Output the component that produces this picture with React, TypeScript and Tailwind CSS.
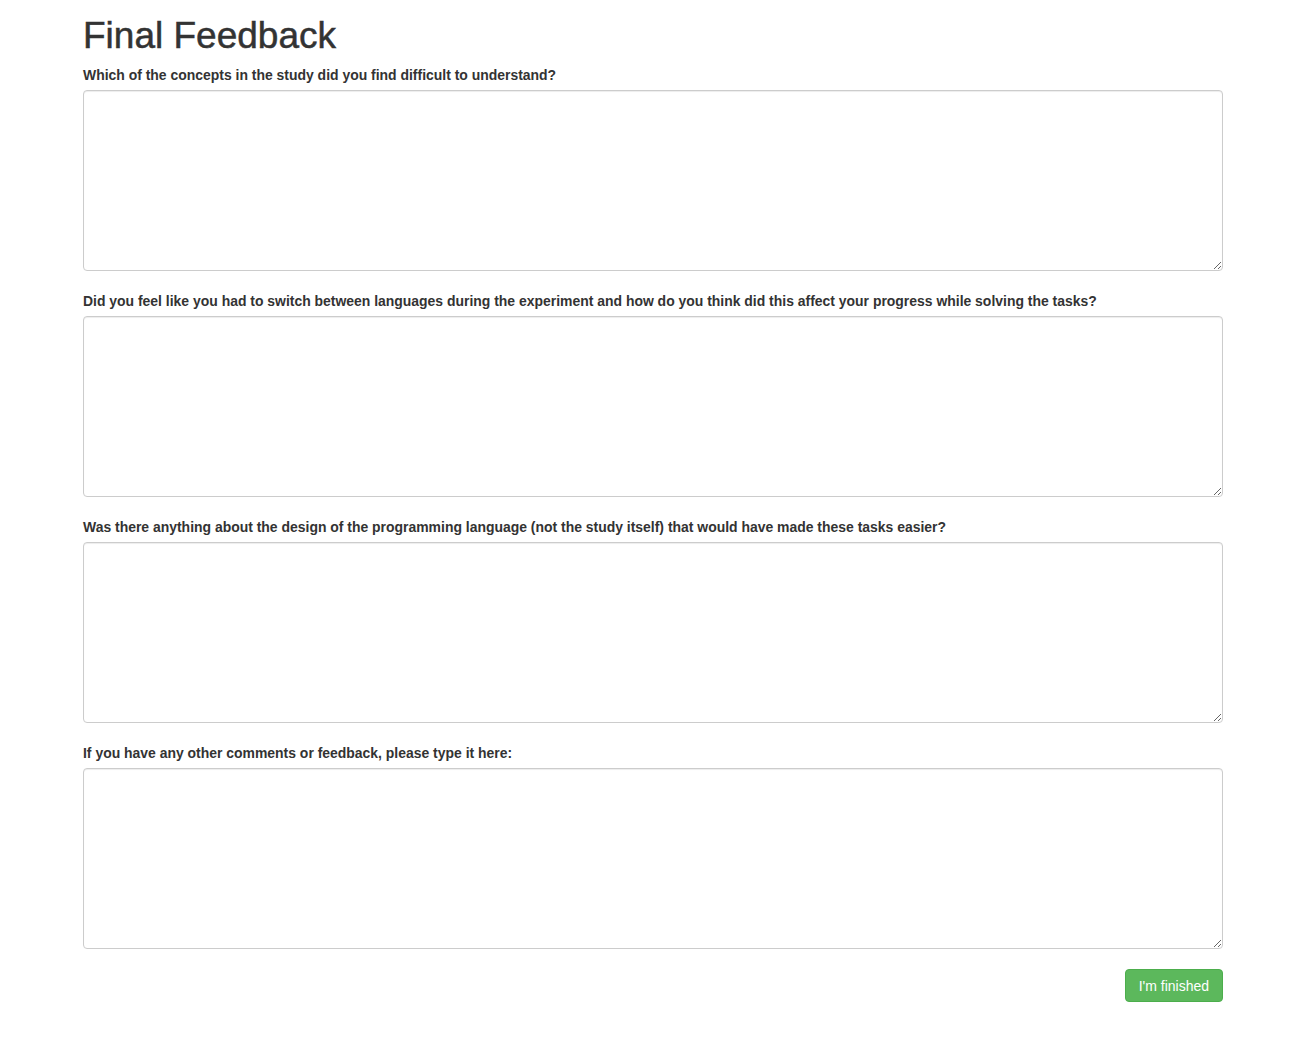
const questions = [
  "Which of the concepts in the study did you find difficult to understand?",
  "Did you feel like you had to switch between languages during the experiment and how do you think did this affect your progress while solving the tasks?",
  "Was there anything about the design of the programming language (not the study itself) that would have made these tasks easier?",
  "If you have any other comments or feedback, please type it here:",
];

export default function App() {
  return (
    <div className="min-h-screen bg-white text-[#333] font-['Liberation_Sans',Arial,sans-serif]">
      <div className="ml-[83px] w-[1140px]">
        <h1 className="mt-[16px] mb-[12px] text-[37px] leading-[40px] font-medium [-webkit-text-stroke:0.5px_#333]">
          Final Feedback
        </h1>
        <form onSubmit={(e) => e.preventDefault()}>
          {questions.map((q, i) => (
            <div key={i} className={i === questions.length - 1 ? "mb-[20px]" : "mb-[23px]"}>
              <label className="block mb-[7px] text-[13.95px] leading-[15px] font-bold">{q}</label>
              <textarea className="block w-full h-[181px] rounded-[4px] border border-[#ccc] px-3 py-1.5 text-sm shadow-[inset_0_1px_1px_rgba(0,0,0,0.075)] outline-none focus:border-[#66afe9]" />
            </div>
          ))}
          <div className="flex justify-end">
            <button
              type="submit"
              className="h-[33px] px-[13px] rounded-[4px] border border-[#4cae4c] bg-[#5cb85c] text-white text-[14px] leading-[20px] hover:bg-[#449d44]"
            >
              I'm finished
            </button>
          </div>
        </form>
      </div>
    </div>
  );
}
